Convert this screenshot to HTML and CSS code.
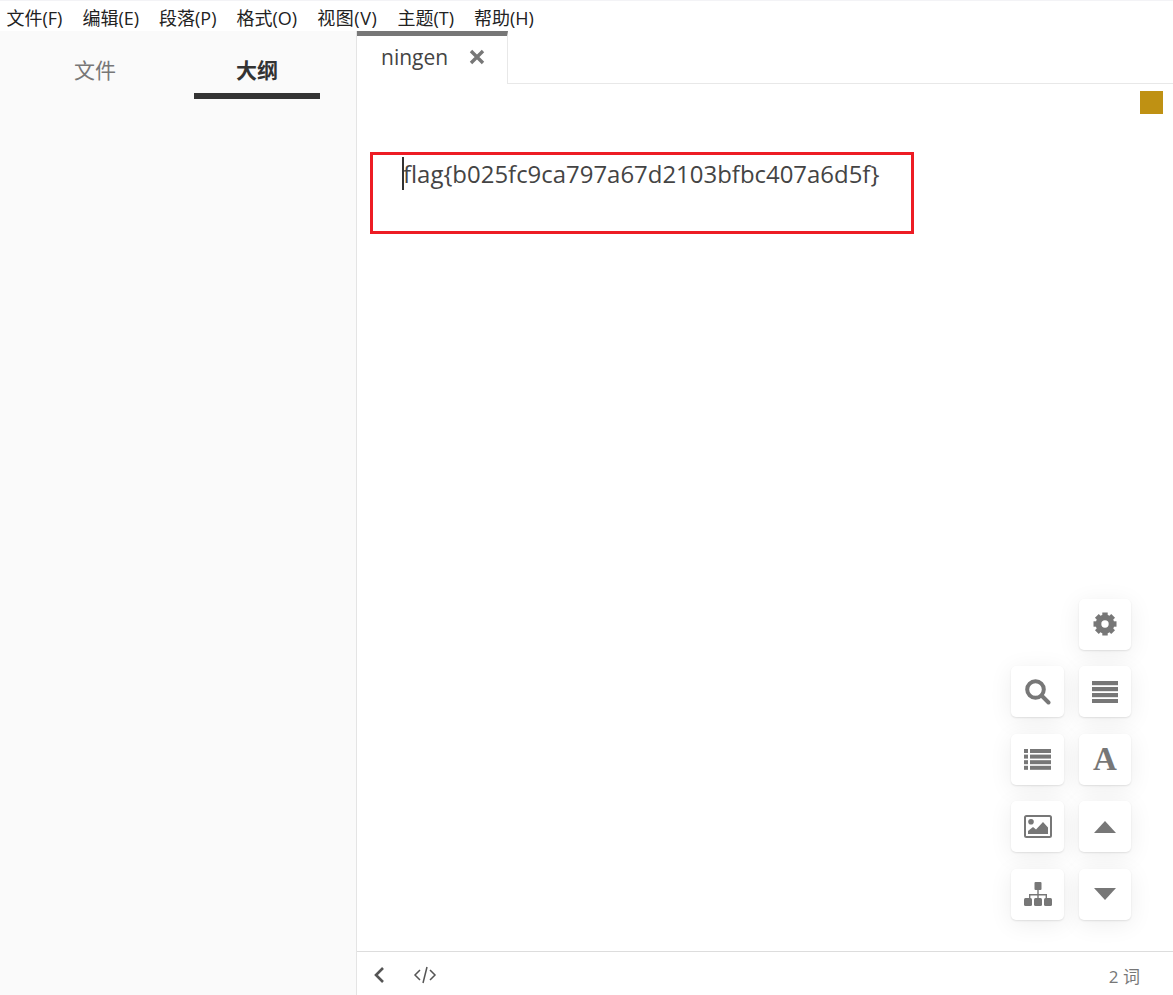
FILE: index.html
```html
<!DOCTYPE html>
<html lang="zh-CN">
<head>
    <meta charset="UTF-8">
    <title>ningen</title>
    <link rel="stylesheet" href="styles.css">
</head>
<body>
    <div class="app">
        <nav class="menubar">
            <span class="menu-item">文件(F)</span>
            <span class="menu-item">编辑(E)</span>
            <span class="menu-item">段落(P)</span>
            <span class="menu-item">格式(O)</span>
            <span class="menu-item menu-item-wide">视图(V)</span>
            <span class="menu-item">主题(T)</span>
            <span class="menu-item">帮助(H)</span>
        </nav>
        <div class="main">
            <aside class="sidebar">
                <div class="side-tab">文件</div>
                <div class="side-tab active">大纲</div>
            </aside>
            <section class="editor">
                <div class="tabbar">
                    <div class="tab">
                        <span class="tab-name">ningen</span>
                        <svg class="tab-close" viewBox="0 0 16 16" width="16" height="16"><path d="M2 2l12 12M14 2L2 14" stroke="#777" stroke-width="3.4"/></svg>
                    </div>
                </div>
                <div class="content">
                    <div class="marker"></div>
                    <p class="flag-line"><span class="caret"></span>flag{b025fc9ca797a67d2103bfbc407a6d5f}</p>
                    <div class="highlight"></div>

                    <!-- floating buttons -->
                    <div class="tools">
                        <div class="tool tool-gear">
                            <svg viewBox="0 0 24 24" width="24" height="24" fill="#777">
                                <circle cx="12" cy="12" r="6.7" fill="none" stroke="#777" stroke-width="5.4"/>
                                <rect x="9.3" y="0.5" width="5.4" height="23"/>
                                <rect x="9.3" y="0.5" width="5.4" height="23" transform="rotate(45 12 12)"/>
                                <rect x="9.3" y="0.5" width="5.4" height="23" transform="rotate(90 12 12)"/>
                                <rect x="9.3" y="0.5" width="5.4" height="23" transform="rotate(135 12 12)"/>
                                <circle cx="12" cy="12" r="3.7" fill="#fff"/>
                            </svg>
                        </div>
                        <div class="tool">
                            <svg viewBox="0 0 26 26" width="26" height="26"><circle cx="10.5" cy="10.5" r="8.3" fill="none" stroke="#777" stroke-width="4"/><path d="M17 17l6.5 6.5" stroke="#777" stroke-width="4" stroke-linecap="round"/></svg>
                        </div>
                        <div class="tool">
                            <svg viewBox="0 0 26 22" width="26" height="22" fill="#777"><rect y="0" width="26" height="4.2"/><rect y="6" width="26" height="4.2"/><rect y="12" width="26" height="4.2"/><rect y="18" width="26" height="4.2"/></svg>
                        </div>
                        <div class="tool">
                            <svg viewBox="0 0 27 21" width="27" height="21" fill="#777"><rect y="0" width="4" height="4"/><rect x="6" y="0" width="21" height="4"/><rect y="5.6" width="4" height="4"/><rect x="6" y="5.6" width="21" height="4"/><rect y="11.2" width="4" height="4"/><rect x="6" y="11.2" width="21" height="4"/><rect y="16.8" width="4" height="4"/><rect x="6" y="16.8" width="21" height="4"/></svg>
                        </div>
                        <div class="tool tool-letter">A</div>
                        <div class="tool">
                            <svg viewBox="0 0 28 23" width="28" height="23"><rect x="1" y="1" width="26" height="21" rx="1.5" fill="none" stroke="#777" stroke-width="2"/><circle cx="7" cy="6.8" r="2.8" fill="#777"/><path d="M4 19v-3l5-4 3 2.5 7-7.5 5 5.5V19z" fill="#777"/></svg>
                        </div>
                        <div class="tool">
                            <svg viewBox="0 0 22 12" width="22" height="12"><path d="M11 0l11 12H0z" fill="#777"/></svg>
                        </div>
                        <div class="tool">
                            <svg viewBox="0 0 28 24" width="28" height="24" fill="#777"><rect x="10.5" y="0" width="7" height="8" rx="1"/><path d="M13.3 8h1.4v4H23v4h-1.4v-2.6h-6.9V16h-1.4v-2.6H6.4V16H5v-4h8.3z"/><rect x="0" y="16" width="8" height="8" rx="1.5"/><rect x="10" y="16" width="8" height="8" rx="1.5"/><rect x="20" y="16" width="8" height="8" rx="1.5"/></svg>
                        </div>
                        <div class="tool">
                            <svg viewBox="0 0 22 12" width="22" height="12"><path d="M0 0h22L11 12z" fill="#777"/></svg>
                        </div>
                    </div>
                </div>
                <footer class="statusbar">
                    <svg class="status-back" viewBox="0 0 12 18" width="12" height="18"><path d="M10 2L3 9l7 7" fill="none" stroke="#555" stroke-width="2.6"/></svg>
                    <svg class="status-code" viewBox="0 0 24 18" width="24" height="18"><path d="M7 4L2 9l5 5M17 4l5 5-5 5M14 1l-4 16" fill="none" stroke="#555" stroke-width="1.5"/></svg>
                    <span class="word-count">2 词</span>
                </footer>
            </section>
        </div>
    </div>
</body>
</html>
```

FILE: styles.css
```css
* {
    box-sizing: border-box;
}

html, body {
    margin: 0;
    height: 100%;
}

body {
    font-family: "Open Sans", "Noto Sans CJK SC", sans-serif;
    background-color: #fff;
    color: #333;
}

.app {
    display: flex;
    flex-direction: column;
    height: 995px;
    overflow: hidden;
}

.menubar {
    display: flex;
    gap: 20px;
    height: 31px;
    padding: 0 0 0 6.5px;
    border-top: 1px solid #f3f3f6;
    font-size: 18px;
    line-height: 34px;
    color: #222;
    white-space: nowrap;
}

.menu-item-wide {
    letter-spacing: 0.6px;
}

.main {
    display: flex;
    flex: 1;
    min-height: 0;
}

.sidebar {
    display: flex;
    width: 357px;
    padding-left: 14px;
    background-color: #fafafa;
    border-right: 1px solid #e4e4e4;
}

.side-tab {
    width: 162px;
    height: 68px;
    padding-top: 23px;
    font-size: 21px;
    line-height: 32px;
    text-align: center;
    color: #777;
}

.side-tab.active {
    position: relative;
    font-weight: bold;
    color: #333;
}

.side-tab.active::after {
    content: "";
    display: block;
    width: 126px;
    height: 6px;
    margin: 7px 0 0 18px;
    background-color: #333;
}

.editor {
    display: flex;
    flex: 1;
    flex-direction: column;
    min-width: 0;
}

.tabbar {
    height: 53px;
    border-bottom: 1px solid #e8e8e8;
}

.tab {
    display: flex;
    align-items: center;
    width: 151px;
    height: 53px;
    padding: 0 0 6px 24px;
    background-color: #fff;
    border-top: 5px solid #777;
    border-right: 1px solid #e8e8e8;
}

.tab-name {
    font-size: 21px;
    color: #444;
}

.tab-close {
    margin-left: 21px;
}

.content {
    position: relative;
    flex: 1;
    min-height: 0;
}

.marker {
    position: absolute;
    top: 7px;
    right: 10px;
    width: 23px;
    height: 23px;
    background-color: #bf9113;
}

.flag-line {
    position: relative;
    margin: 0;
    padding: 69px 0 0 46px;
    font-size: 23.95px;
    line-height: 42px;
    color: #444;
}

.caret {
    position: absolute;
    left: 45px;
    top: 73px;
    width: 2px;
    height: 33px;
    background-color: #333;
}

.highlight {
    position: absolute;
    left: 13px;
    top: 68px;
    width: 544px;
    height: 82px;
    border: 3px solid #ed1c24;
}

.tools {
    position: absolute;
    right: 42px;
    top: 514.75px;
    display: grid;
    grid-template-columns: 53px 52px;
    grid-auto-rows: 51px;
    gap: 16.5px 15px;
}

.tool {
    display: flex;
    align-items: center;
    justify-content: center;
    background-color: #fff;
    border-radius: 5px;
    box-shadow: 0 1px 2px rgba(0, 0, 0, 0.1), 0 4px 24px rgba(0, 0, 0, 0.07);
}

.tool-gear {
    grid-column: 2;
}

.tool-letter {
    font-family: "Liberation Serif", serif;
    font-size: 33px;
    font-weight: bold;
    color: #777;
}

.statusbar {
    display: flex;
    align-items: center;
    height: 44px;
    padding: 3px 33px 0 16px;
    border-top: 1px solid #ddd;
}

.status-code {
    margin-left: 28px;
}

.word-count {
    margin-left: auto;
    font-size: 17px;
    color: #777;
}
```
